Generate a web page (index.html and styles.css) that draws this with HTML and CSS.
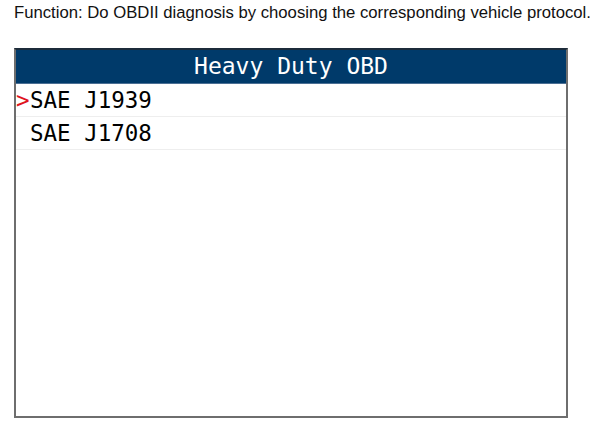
FILE: index.html
```html
<!DOCTYPE html>
<html lang="en">
<head>
<meta charset="UTF-8">
<title>Heavy Duty OBD</title>
<link rel="stylesheet" href="styles.css">
</head>
<body>

    <p class="intro">Function: Do OBDII diagnosis by choosing the corresponding vehicle protocol.</p>

    <div class="screen">
        <div class="screen-title">Heavy Duty OBD</div>
        <ul class="menu">
            <li class="menu-item selected"><span class="cursor">&gt;</span>SAE J1939</li>
            <li class="menu-item"><span class="cursor"></span>SAE J1708</li>
        </ul>
    </div>

</body>
</html>
```

FILE: styles.css
```css
  body {
      margin: 0;
      padding: 0 14px;
      background: #fff;
      font-family: "Liberation Sans", Arial, sans-serif;
  }

  .intro {
      margin: 3px 0 0;
      font-size: 16.7px;
      line-height: 19px;
      color: #111;
      white-space: nowrap;
  }

  .screen {
      margin-top: 26px;
      width: 554px;
      height: 370px;
      box-sizing: border-box;
      border: 2px solid #6e6e6e;
      border-top-color: #1c2b3a;
      background: #fff;
  }

  .screen-title {
      height: 33px;
      background: #003a6a;
      border-bottom: 1px solid #4b6f94;
      color: #fff;
      text-align: center;
      font-family: "DejaVu Sans Mono", monospace;
      font-size: 23px;
      line-height: 33px;
  }

  .menu {
      list-style: none;
      margin: 0;
      padding: 0;
  }

  .menu-item {
      display: flex;
      height: 32px;
      border-bottom: 1px solid #eeeeee;
      font-family: "DejaVu Sans Mono", monospace;
      font-size: 22.5px;
      line-height: 32px;
      color: #000;
  }

  .cursor {
      width: 14px;
      color: #e0141e;
  }
```
